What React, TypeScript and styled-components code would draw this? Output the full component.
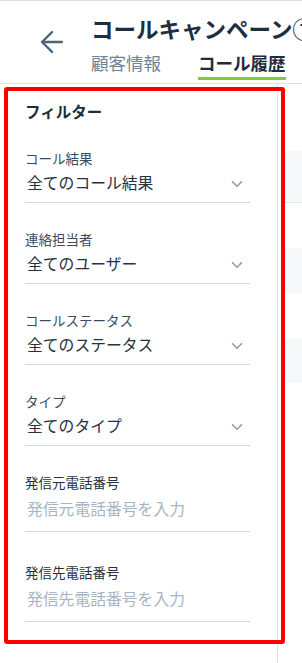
import { FC } from "react";
import styled, { createGlobalStyle } from "styled-components";
import { ArrowLeft, ChevronDown } from "lucide-react";

interface filterItemType {
  id: number;
  label: string;
  value: string;
  kind: "select" | "input";
}

const filterItems: filterItemType[] = [
  { id: 1, label: "コール結果", value: "全てのコール結果", kind: "select" },
  { id: 2, label: "連絡担当者", value: "全てのユーザー", kind: "select" },
  { id: 3, label: "コールステータス", value: "全てのステータス", kind: "select" },
  { id: 4, label: "タイプ", value: "全てのタイプ", kind: "select" },
  { id: 5, label: "発信元電話番号", value: "発信元電話番号を入力", kind: "input" },
  { id: 6, label: "発信先電話番号", value: "発信先電話番号を入力", kind: "input" },
];

const rows = [false, true, false, true, false, false, false];

const App: FC = () => {
  return (
    <>
      <GlobalStyle />
      <SPage>
        <SHeader>
          <SBack>
            <ArrowLeft size={40} strokeWidth={1.6} />
          </SBack>
          <SHeaderText>
            <STitle>コールキャンペーン①詳細</STitle>
            <STabs>
              <STab>顧客情報</STab>
              <STab active>コール履歴</STab>
            </STabs>
          </SHeaderText>
        </SHeader>
        <SBody>
          <SSidebar>
            <SHeading>フィルター</SHeading>
            {filterItems.map((item) => (
              <SField key={item.id} input={item.kind === "input"}>
                <SLabel strong={item.kind === "input"}>{item.label}</SLabel>
                <SValueRow input={item.kind === "input"}>
                  <SValue placeholder={item.kind === "input"}>{item.value}</SValue>
                  {item.kind === "select" ? (
                    <SChevron>
                      <ChevronDown size={18} strokeWidth={2.2} />
                    </SChevron>
                  ) : null}
                </SValueRow>
              </SField>
            ))}
          </SSidebar>
          <SContent>
            <STableHead />
            {rows.map((striped, i) => (
              <SRow key={i} striped={striped} />
            ))}
          </SContent>
          <SHighlight />
        </SBody>
      </SPage>
    </>
  );
};

export default App;

const GlobalStyle = createGlobalStyle`
  html, body {
    margin: 0;
    padding: 0;
    background: #fff;
    overflow: hidden;
  }
  body {
    font-family: "Noto Sans CJK JP", "Noto Sans", sans-serif;
  }
`;

const SPage = styled.div`
  width: 302px;
  height: 663px;
  display: flex;
  flex-direction: column;
  overflow: hidden;
`;

const SHeader = styled.div`
  display: flex;
  align-items: flex-start;
  height: 82px;
  border-top: 1px solid #d9dee4;
  border-bottom: 1px solid #dfe4ea;
  padding-left: 35px;
  flex-shrink: 0;
`;

const SBack = styled.div`
  display: flex;
  color: #4c6378;
  margin-top: 21px;
  width: 34px;
  flex-shrink: 0;
`;

const SHeaderText = styled.div`
  display: flex;
  flex-direction: column;
  margin-left: 22px;
  min-width: 0;
`;

const STitle = styled.div`
  font-size: 22.5px;
  font-weight: 700;
  color: #1f2e3e;
  line-height: 32px;
  margin-top: 11px;
  white-space: nowrap;
`;

const STabs = styled.div`
  display: flex;
  gap: 37px;
  margin-top: 2px;
`;

const STab = styled.div<{ active?: boolean }>`
  font-size: 17.5px;
  line-height: 34px;
  height: 34px;
  box-sizing: border-box;
  white-space: nowrap;
  color: ${(p) => (p.active ? "#1e2d3d" : "#6f8295")};
  font-weight: ${(p) => (p.active ? 700 : 400)};
  border-bottom: 3px solid ${(p) => (p.active ? "#8cc63f" : "transparent")};
  margin-bottom: -1px;
  padding-top: 0;
`;

const SBody = styled.div`
  position: relative;
  display: flex;
  flex: 1;
`;

const SSidebar = styled.div`
  width: 278px;
  flex-shrink: 0;
  box-sizing: border-box;
  border-right: 1px solid #dce2e8;
  padding: 16px 27px 0 25px;
  background: #fff;
`;

const SHeading = styled.div`
  font-size: 15.5px;
  font-weight: 700;
  color: #1f2d3b;
  line-height: 22px;
  margin-bottom: 27px;
`;

const SField = styled.div<{ input?: boolean }>`
  border-bottom: 1px solid #cfd8e1;
  margin-bottom: ${(p) => (p.input ? 31 : 27)}px;
`;

const SLabel = styled.div<{ strong?: boolean }>`
  font-size: 13.5px;
  line-height: 18px;
  color: ${(p) => (p.strong ? "#27323e" : "#3d4c5c")};
`;

const SValueRow = styled.div<{ input?: boolean }>`
  display: flex;
  align-items: center;
  justify-content: space-between;
  margin-top: ${(p) => (p.input ? 6 : 4)}px;
  padding-bottom: ${(p) => (p.input ? 10 : 7)}px;
  height: 24px;
`;

const SValue = styled.div<{ placeholder?: boolean }>`
  font-size: 15.8px;
  line-height: 24px;
  padding-left: 2px;
  color: ${(p) => (p.placeholder ? "#a8b5c2" : "#26323f")};
  white-space: nowrap;
`;

const SChevron = styled.div`
  display: flex;
  color: #8d9db0;
  margin-right: 4px;
  margin-top: 2px;
`;

const SContent = styled.div`
  flex: 1;
  padding-top: 67px;
  padding-left: 6px;
`;

const STableHead = styled.div`
  height: 51px;
  background: #f6f8fa;
  border-bottom: 1px solid #e1e6ec;
`;

const SRow = styled.div<{ striped?: boolean }>`
  height: 45px;
  background: ${(p) => (p.striped ? "#f6f8fa" : "#fff")};
`;

const SHighlight = styled.div`
  position: absolute;
  left: 4px;
  top: 3px;
  width: 273px;
  height: 549px;
  border: 4px solid #ff0000;
  border-radius: 3px;
  pointer-events: none;
`;
